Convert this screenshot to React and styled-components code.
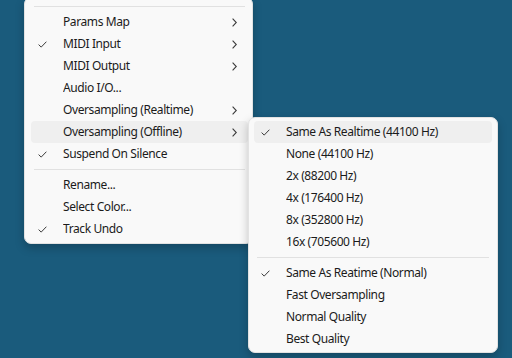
import React from "react";
import styled, { createGlobalStyle } from "styled-components";

const Global = createGlobalStyle`
  html, body { margin: 0; padding: 0; }
  body {
    background: #1a5b7c;
    font-family: "Noto Sans", "Open Sans", sans-serif;
    -webkit-font-smoothing: antialiased;
  }
  #root { width: 512px; height: 358px; overflow: hidden; }
`;

const Desktop = styled.div`
  position: relative;
  width: 512px;
  height: 358px;
  background: #1a5b7c;
  overflow: hidden;
`;

const Menu = styled.div`
  position: absolute;
  left: ${(p) => p.$left}px;
  top: ${(p) => p.$top}px;
  width: ${(p) => p.$width}px;
  box-sizing: border-box;
  padding: ${(p) => p.$pad};
  background: #f9f9f9;
  border: 1px solid #e2e2e2;
  border-radius: 7px;
  box-shadow: 0 4px 10px rgba(0, 0, 0, 0.22);
  display: flex;
  flex-direction: column;
`;

const Item = styled.div`
  height: 22px;
  display: grid;
  grid-template-columns: 32px 1fr 16px;
  align-items: center;
  border-radius: 4px;
  background: ${(p) => (p.$active ? "#efefef" : "transparent")};
  color: #1b1b1b;
  font-size: 12px;
  letter-spacing: -0.4px;
  line-height: 22px;
  white-space: nowrap;
`;

const Check = styled.span`
  display: flex;
  align-items: center;
  padding-left: 7px;
`;

const Label = styled.span`
  overflow: hidden;
`;

const Arrow = styled.span`
  display: flex;
  align-items: center;
  justify-content: flex-start;
`;

const Separator = styled.div`
  height: 1px;
  background: #e1e1e1;
  margin: 4px ${(p) => p.$inset}px;
`;

const CheckIcon = () => (
  <svg width="9" height="7" viewBox="0 0 9 7">
    <path d="M0.6 3.6 L3.2 6.1 L8.4 0.7" fill="none" stroke="#3a3a3a" strokeWidth="1" />
  </svg>
);

const ChevronIcon = () => (
  <svg width="5" height="9" viewBox="0 0 5 9">
    <path d="M0.6 0.6 L4.3 4.5 L0.6 8.4" fill="none" stroke="#3a3a3a" strokeWidth="1.1" />
  </svg>
);

const Row = ({ checked, sub, active, children }) => (
  <Item $active={active}>
    <Check>{checked ? <CheckIcon /> : null}</Check>
    <Label>{children}</Label>
    <Arrow>{sub ? <ChevronIcon /> : null}</Arrow>
  </Item>
);

const mainItems = [
  { sep: true },
  { label: "Params Map", sub: true },
  { label: "MIDI Input", sub: true, checked: true },
  { label: "MIDI Output", sub: true },
  { label: "Audio I/O..." },
  { label: "Oversampling (Realtime)", sub: true },
  { label: "Oversampling (Offline)", sub: true, active: true },
  { label: "Suspend On Silence", checked: true },
  { sep: true },
  { label: "Rename..." },
  { label: "Select Color..." },
  { label: "Track Undo", checked: true },
];

const subItems = [
  { label: "Same As Realtime (44100 Hz)", checked: true, active: true },
  { label: "None (44100 Hz)" },
  { label: "2x (88200 Hz)" },
  { label: "4x (176400 Hz)" },
  { label: "8x (352800 Hz)" },
  { label: "16x (705600 Hz)" },
  { sep: true },
  { label: "Same As Reatime (Normal)", checked: true },
  { label: "Fast Oversampling" },
  { label: "Normal Quality" },
  { label: "Best Quality" },
];

const renderItems = (items, inset) =>
  items.map((it, i) =>
    it.sep ? (
      <Separator key={i} $inset={inset} />
    ) : (
      <Row key={i} checked={it.checked} sub={it.sub} active={it.active}>
        {it.label}
      </Row>
    )
  );

export default function App() {
  return (
    <Desktop>
      <Global />
      <Menu $left={24} $top={-3} $width={229} $pad="4px 4px 3px 6px">
        {renderItems(mainItems, 3)}
      </Menu>
      <Menu $left={248} $top={117} $width={250} $pad="3px 5px 2px 5px">
        {renderItems(subItems, 3)}
      </Menu>
    </Desktop>
  );
}
